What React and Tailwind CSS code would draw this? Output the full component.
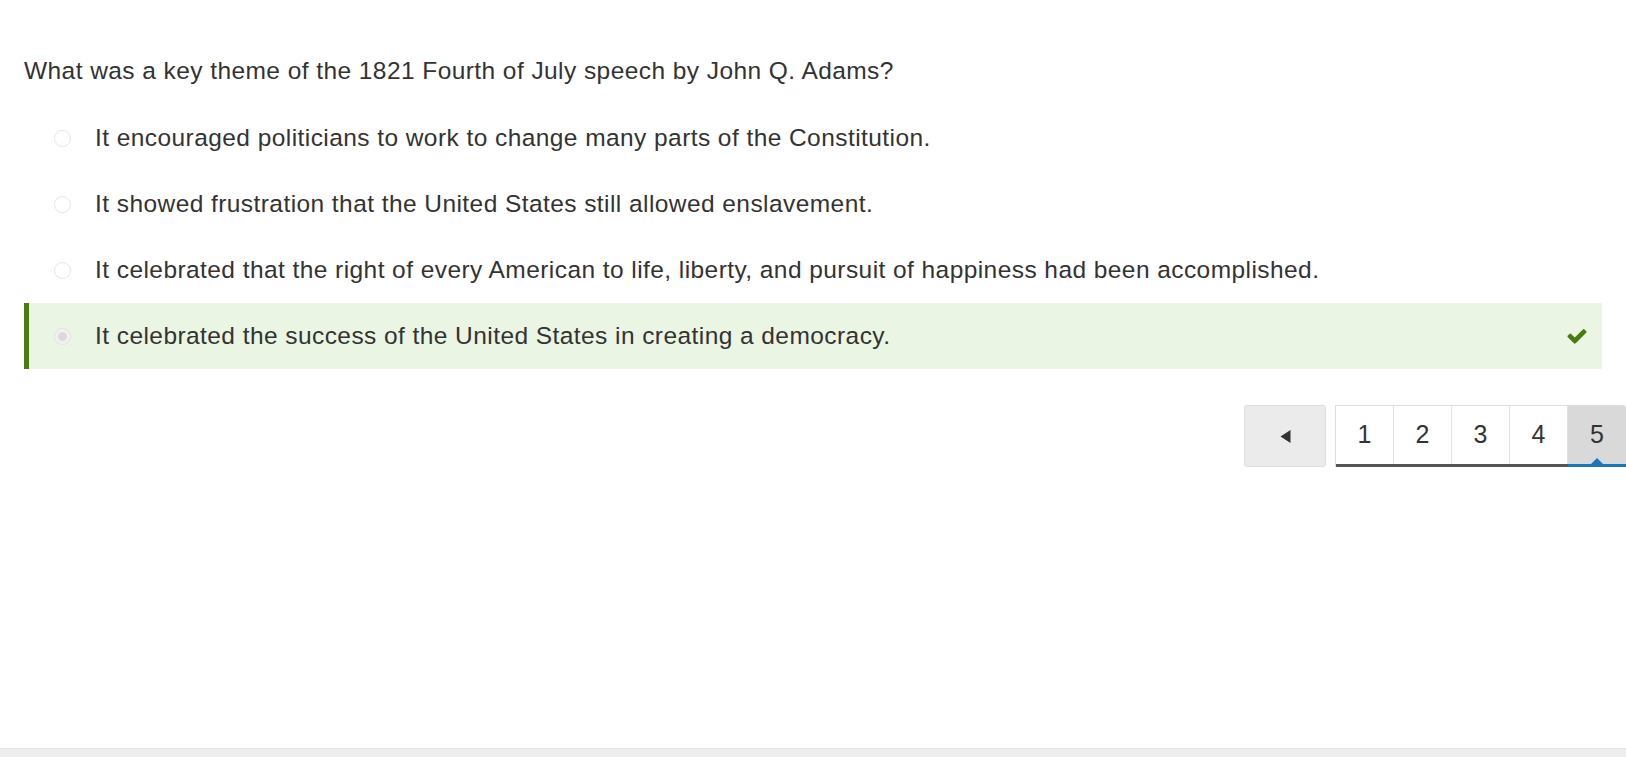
import { useState } from 'react'

const options = [
  'It encouraged politicians to work to change many parts of the Constitution.',
  'It showed frustration that the United States still allowed enslavement.',
  'It celebrated that the right of every American to life, liberty, and pursuit of happiness had been accomplished.',
  'It celebrated the success of the United States in creating a democracy.',
]

function Radio({ checked }) {
  return (
    <span className={`flex h-[17px] w-[17px] shrink-0 items-center justify-center rounded-full border ${checked ? 'border-[#e2e2e2] bg-[#f1f1f1]' : 'border-[#e6e6e6] bg-white'}`}>
      {checked && <span className="h-[9px] w-[9px] rounded-full bg-[#dadada]" />}
    </span>
  )
}

function Check() {
  return (
    <svg width="22" height="22" viewBox="0 0 1792 1792" className="shrink-0">
      <path
        fill="#4a7a12"
        d="M1671 566q0 40-28 68l-724 724-136 136q-28 28-68 28t-68-28l-136-136-362-362q-28-28-28-68t28-68l136-136q28-28 68-28t68 28l294 295 656-657q28-28 68-28t68 28l136 136q28 28 28 68z"
      />
    </svg>
  )
}

export default function App() {
  const [picked] = useState(3)
  const pages = [1, 2, 3, 4, 5]

  return (
    <div className="flex h-[757px] w-[1626px] flex-col overflow-hidden bg-white text-[#333]" style={{ fontFamily: '"Liberation Sans", Arial, sans-serif' }}>
      <div className="flex-1 pt-[54px]">
        <div className="px-[24px]">
          <p className="text-[24.5px] leading-[34px] tracking-[0.43px]">What was a key theme of the 1821 Fourth of July speech by John Q. Adams?</p>

          <div className="mt-[17px] flex flex-col">
            {options.map((o, i) => {
              const on = i === picked
              return (
                <div
                  key={i}
                  className={`flex h-[66px] items-center border-l-[5px] pr-[14px] ${on ? 'border-[#4d7a13] bg-[#ebf5e4]' : 'border-transparent'}`}
                >
                  <span className="ml-[25px]"><Radio checked={on} /></span>
                  <span className="ml-[24px] flex-1 text-[24.5px] leading-[30px] tracking-[0.43px]">{o}</span>
                  {on && <Check />}
                </div>
              )
            })}
          </div>
        </div>

        <div className="mt-[36px] flex justify-end">
          <button className="flex h-[62px] w-[82px] items-center justify-center rounded-[3px] border border-[#dedede] bg-[#ebebeb]">
            <svg width="11" height="15" viewBox="0 0 11 15"><path d="M0.5 7.5 L10.5 1 L10.5 14 Z" fill="#333" /></svg>
          </button>
          <div className="relative ml-[9px] flex h-[62px] overflow-hidden rounded-tr-[3px] border-l border-t border-[#dedede] pb-[3px]">
            {pages.map((p) => {
              const cur = p === 5
              return (
                <div
                  key={p}
                  className={`flex w-[58px] items-center justify-center text-[25px] ${cur ? 'bg-[#d9d9d9]' : 'border-r border-[#e3e3e3] bg-white'}`}
                >
                  {p}
                </div>
              )
            })}
            <span className="absolute bottom-0 left-0 right-[58px] h-[3px] bg-[#555]" />
            <span className="absolute bottom-0 right-0 h-[3px] w-[58px] bg-[#1b78b8]" />
            <span className="absolute bottom-[3px] right-[23px] h-0 w-0 border-x-[6px] border-b-[6px] border-x-transparent border-b-[#1b78b8]" />
          </div>
        </div>
      </div>

      <div className="h-[9px] border-t border-[#e6e6e6] bg-[#eeeeee]" />
    </div>
  )
}
